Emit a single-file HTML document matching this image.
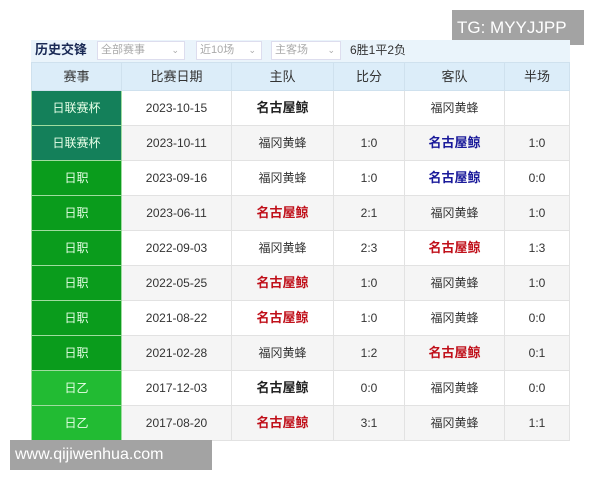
<!DOCTYPE html>
<html><head><meta charset="utf-8"><style>
*{margin:0;padding:0;box-sizing:border-box}
body{width:600px;height:480px;background:#fff;position:relative;overflow:hidden;font-family:"Liberation Sans","Noto Sans CJK SC",sans-serif;font-size:12px;color:#333}
.tg{position:absolute;left:452px;top:10px;width:132px;height:35px;background:#a3a3a3;color:#fff;font-size:17px;line-height:35px;padding-left:5px}
.www{position:absolute;left:10px;top:440px;width:202px;height:30px;background:#a3a3a3;color:#fff;font-size:16px;line-height:30px;padding-left:5px}
.bar{position:absolute;left:31px;top:40px;width:539px;height:22px;background:#eaf4fb;line-height:20px}
.bar b{position:absolute;left:4px;top:0;font-size:13px;color:#1a2a55}
.sel{position:absolute;top:1px;height:19px;border:1px solid #dde;background:#fff;color:#aaa;font-size:11px;padding-left:3px;line-height:17px}
.sel i{position:absolute;right:5px;font-style:normal;font-size:9px}
table{position:absolute;left:31px;top:62px;border-collapse:collapse;width:539px;table-layout:fixed}
td,th{text-align:center;border:1px solid #e2e2e2;font-weight:normal;height:35px;line-height:14px;padding:0;font-size:12px}
th{background:#dcedf9;height:28px;font-size:13px;color:#333;border-color:#cfe1ee}
tr:nth-child(odd) td{background:#f5f5f5}
td.l{color:#e8ffe8;border-color:#9fdc9f}
.g1{background:#14805a!important}.g2{background:#0a9c1c!important}.g3{background:#22bb33!important}
.k{font-weight:bold;color:#222;font-size:13px}.r{font-weight:bold;color:#c0101a;font-size:13px}.u{font-weight:bold;color:#1a1a9a;font-size:13px}
</style></head><body>
<div class="tg">TG: MYYJJPP</div>
<div class="bar"><b>历史交锋</b>
<div class="sel" style="left:66px;width:88px">全部赛事<i>⌄</i></div>
<div class="sel" style="left:165px;width:66px">近10场<i>⌄</i></div>
<div class="sel" style="left:240px;width:70px">主客场<i>⌄</i></div>
<span style="position:absolute;left:319px;color:#333;font-size:12px">6胜1平2负</span></div>
<table>
<tr><th style="width:90px">赛事</th><th style="width:110px">比赛日期</th><th style="width:102px">主队</th><th style="width:71px">比分</th><th style="width:100px">客队</th><th>半场</th></tr>
<tr><td class="l g1">日联赛杯</td><td>2023-10-15</td><td class="k">名古屋鲸</td><td></td><td>福冈黄蜂</td><td></td></tr>
<tr><td class="l g1">日联赛杯</td><td>2023-10-11</td><td>福冈黄蜂</td><td>1:0</td><td class="u">名古屋鲸</td><td>1:0</td></tr>
<tr><td class="l g2">日职</td><td>2023-09-16</td><td>福冈黄蜂</td><td>1:0</td><td class="u">名古屋鲸</td><td>0:0</td></tr>
<tr><td class="l g2">日职</td><td>2023-06-11</td><td class="r">名古屋鲸</td><td>2:1</td><td>福冈黄蜂</td><td>1:0</td></tr>
<tr><td class="l g2">日职</td><td>2022-09-03</td><td>福冈黄蜂</td><td>2:3</td><td class="r">名古屋鲸</td><td>1:3</td></tr>
<tr><td class="l g2">日职</td><td>2022-05-25</td><td class="r">名古屋鲸</td><td>1:0</td><td>福冈黄蜂</td><td>1:0</td></tr>
<tr><td class="l g2">日职</td><td>2021-08-22</td><td class="r">名古屋鲸</td><td>1:0</td><td>福冈黄蜂</td><td>0:0</td></tr>
<tr><td class="l g2">日职</td><td>2021-02-28</td><td>福冈黄蜂</td><td>1:2</td><td class="r">名古屋鲸</td><td>0:1</td></tr>
<tr><td class="l g3">日乙</td><td>2017-12-03</td><td class="k">名古屋鲸</td><td>0:0</td><td>福冈黄蜂</td><td>0:0</td></tr>
<tr><td class="l g3">日乙</td><td>2017-08-20</td><td class="r">名古屋鲸</td><td>3:1</td><td>福冈黄蜂</td><td>1:1</td></tr>
</table>
<div class="www">www.qijiwenhua.com</div>
</body></html>
